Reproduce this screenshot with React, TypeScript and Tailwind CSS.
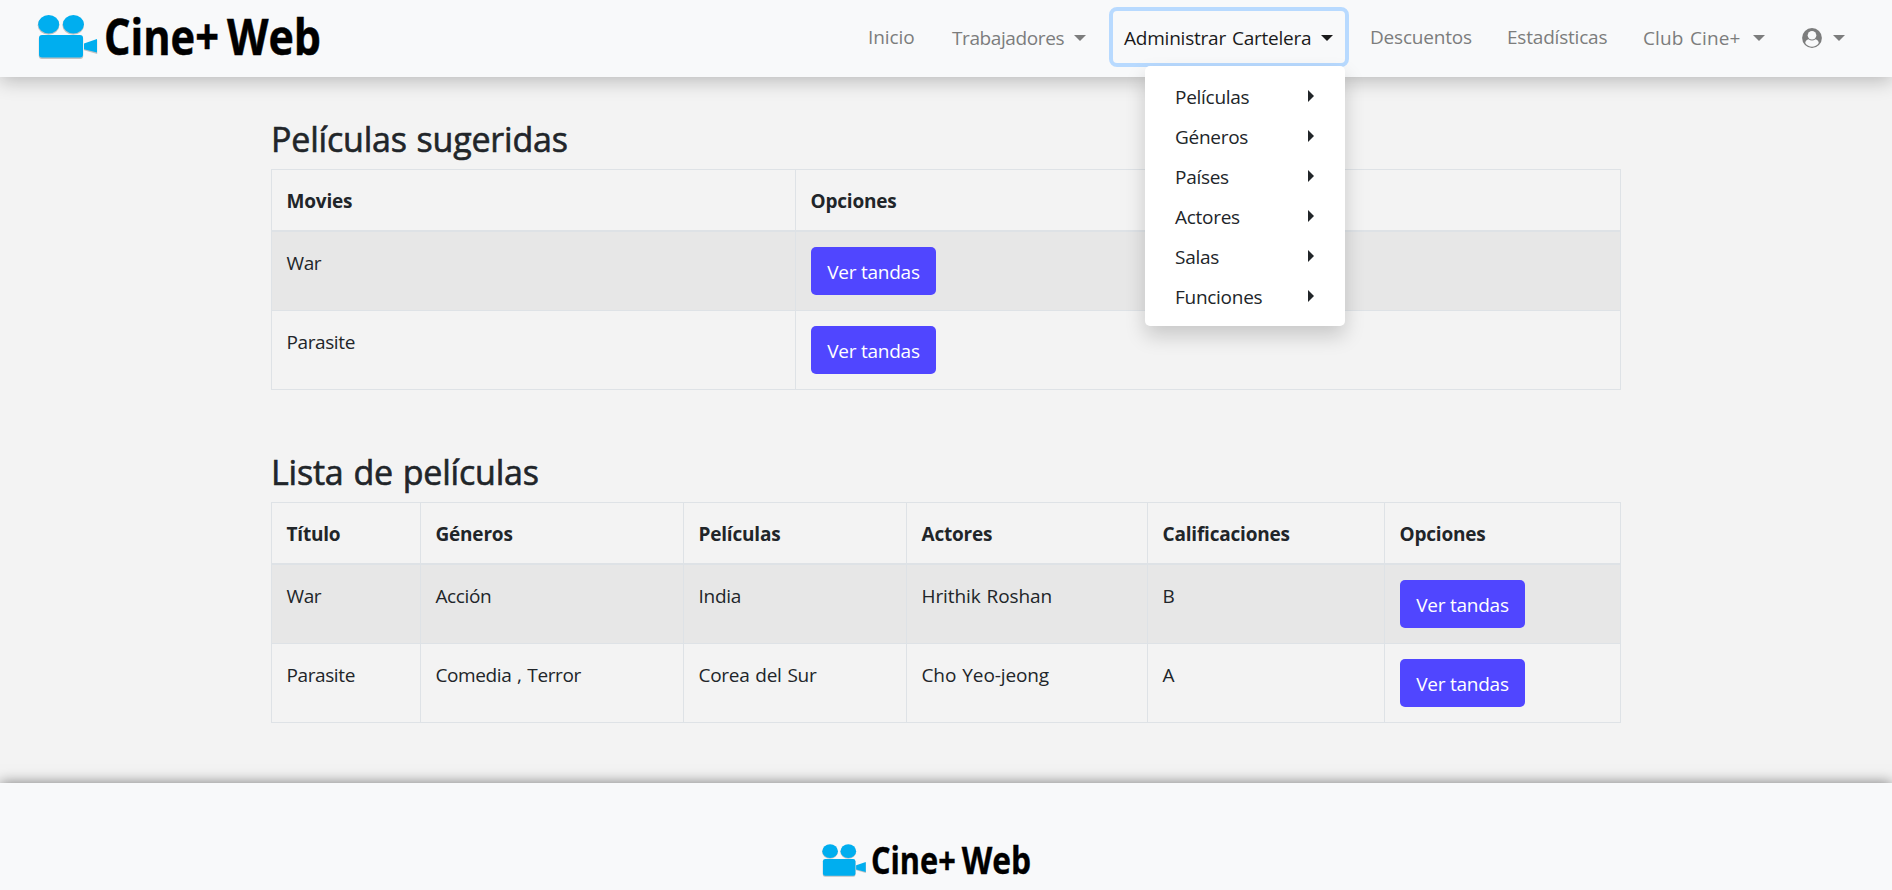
import { ReactNode } from "react";

function Logo({ className }: { className: string }) {
  return (
    <svg viewBox="0 0 290 50" className={`overflow-visible ${className}`} role="img" aria-label="Cine+ Web">
      <g fill="#808080" opacity="0.45" transform="translate(0 1)">
        <ellipse cx="13.5" cy="12.3" rx="10.8" ry="9.4" />
        <ellipse cx="38.2" cy="12.3" rx="10.8" ry="9.4" />
        <rect x="3.8" y="23" width="44.4" height="23" rx="3" />
        <path d="M49 31.6 62.2 27v14L49 37.2z" />
      </g>
      <g fill="#00aeef">
        <ellipse cx="13.7" cy="12.3" rx="10.5" ry="9.2" />
        <ellipse cx="38.4" cy="12.3" rx="10.5" ry="9.2" />
        <rect x="4" y="23" width="44" height="22.6" rx="3" />
        <path d="M49 31.6 62 27v13.5L49 37.2z" />
      </g>
      <g fill="#000" stroke="#000" strokeWidth="0.5" fontFamily="Open Sans, sans-serif" fontWeight="700" fontSize="51" letterSpacing="0" wordSpacing="0">
        <text x="69" y="43" textLength="115" lengthAdjust="spacingAndGlyphs">Cine+</text>
        <text x="192" y="43" textLength="94" lengthAdjust="spacingAndGlyphs">Web</text>
      </g>
    </svg>
  );
}

function Caret() {
  return (
    <svg viewBox="0 0 12 6" className="h-1.5 w-3 shrink-0" fill="currentColor">
      <path d="M0 0h12L6 6z" />
    </svg>
  );
}

const movies = [
  { title: "War", genres: "Acción", country: "India", actors: "Hrithik Roshan", rating: "B" },
  { title: "Parasite", genres: "Comedia , Terror", country: "Corea del Sur", actors: "Cho Yeo-jeong", rating: "A" },
];

const menu = ["Películas", "Géneros", "Países", "Actores", "Salas", "Funciones"];

function Th({ children, className }: { children: ReactNode; className: string }) {
  return (
    <th className={`border-r border-b-2 border-[#dee2e6] px-[14.5px] pt-0.5 text-left font-bold tracking-[-0.2px] ${className}`}>
      {children}
    </th>
  );
}

function Td({ children, className = "" }: { children: ReactNode; className?: string }) {
  return (
    <td className={`border-r border-b border-[#dee2e6] px-[14.5px] pt-4 align-top ${className}`}>{children}</td>
  );
}

function TandasButton() {
  return (
    <button className="-mt-px ml-[0.5px] block h-12 w-[125px] rounded-[5px] bg-[#5046ff] pt-0.5 text-center tracking-[-0.25px] whitespace-nowrap text-white">
      Ver tandas
    </button>
  );
}

const tableClass =
  "w-[1350px] table-fixed border-separate border-spacing-0 border-t border-l border-[#dee2e6] text-[19px] leading-[30px]";
const headingClass =
  "h-[42px] text-[34px] leading-[40px] font-medium tracking-[-0.2px] [-webkit-text-stroke:0.6px_#212529]";

export default function App() {
  return (
    <div className="flex h-[890px] flex-col overflow-hidden bg-[#f3f3f3] font-['Open_Sans',sans-serif] tracking-[-0.28px] text-[#212529] [word-spacing:1.2px]">
      <nav className="relative z-10 flex h-[77px] shrink-0 items-start bg-[#f8f9fa] pl-[35px] text-[19px] leading-[30px] text-[#7c7d7d] shadow-[0_4px_18px_rgba(0,0,0,0.24)]">
        <Logo className="mt-3 h-[50px] w-[290px] shrink-0" />
        <div className="ml-[543px] flex items-start pt-[22px] whitespace-nowrap">
          <span className="w-[84px] tracking-[-0.1px]">Inicio</span>
          <span className="flex w-[157px] items-center justify-between pt-px pr-[23px] tracking-[-0.4px]">Trabajadores<Caret /></span>
          <div className="relative -mt-[15px] h-[60px] w-[240px] rounded-[8px] border-4 border-[#b8daff] text-[#1a1a1a]">
            <span className="flex h-full items-center justify-between pt-px pr-3 pl-[11px] tracking-[-0.22px]">Administrar Cartelera<Caret /></span>
            <ul className="absolute top-[55px] left-8 h-[260px] w-[200px] rounded-[5px] bg-white pt-[11px] text-[#212529] shadow-[0_10px_20px_rgba(0,0,0,0.175)]">
              {menu.map((item) => (
                <li key={item} className="flex h-10 items-center justify-between pr-[31px] pl-[30px]">
                  {item}
                  <svg viewBox="0 0 6 12" className="mb-[3px] h-3 w-1.5" fill="currentColor">
                    <path d="M0 0v12l6-6z" />
                  </svg>
                </li>
              ))}
            </ul>
          </div>
          <span className="ml-[21px] w-[137px] tracking-[-0.2px]">Descuentos</span>
          <span className="w-[136px] tracking-[-0.2px]">Estadísticas</span>
          <span className="flex w-[122px] items-center justify-between pt-px tracking-[0.15px]">Club Cine+<Caret /></span>
          <span className="ml-[37px] flex h-[31px] w-[43px] items-center justify-between">
            <svg viewBox="0 0 20 20" className="h-5 w-5">
              <circle cx="10" cy="10" r="9.9" fill="currentColor" />
              <circle cx="10" cy="7.3" r="4.3" fill="#f8f9fa" />
              <path fill="#f8f9fa" d="M3.2 14.9c.3-1.9 1.500-3.400 3.300-3.700 2.200 1.700 4.800 1.700 7 0 1.800.3 3 1.800 3.300 3.700-3.300 5.100-10.300 5.100-13.600 0z" />
            </svg>
            <Caret />
          </span>
        </div>
      </nav>

      <main className="h-[706px] shrink-0 pt-[42px] pl-[271px]">
        <h2 className={headingClass}>Películas sugeridas</h2>
        <table className={`mt-2 ${tableClass}`}>
          <thead>
            <tr className="h-[62px]">
              <Th className="w-[524px]">Movies</Th>
              <Th className="w-[825px]">Opciones</Th>
            </tr>
          </thead>
          <tbody>
            {movies.map((m) => (
              <tr key={m.title} className="h-[79px] odd:bg-[#e7e7e7]">
                <Td className="tracking-[-0.4px]">{m.title}</Td>
                <Td><TandasButton /></Td>
              </tr>
            ))}
          </tbody>
        </table>

        <h2 className={`mt-[62px] ${headingClass}`}>Lista de películas</h2>
        <table className={`mt-2 ${tableClass}`}>
          <thead>
            <tr className="h-[62px]">
              <Th className="w-[149px]">Título</Th>
              <Th className="w-[263px]">Géneros</Th>
              <Th className="w-[223px]">Películas</Th>
              <Th className="w-[241px]">Actores</Th>
              <Th className="w-[237px]">Calificaciones</Th>
              <Th className="w-[236px]">Opciones</Th>
            </tr>
          </thead>
          <tbody>
            {movies.map((m) => (
              <tr key={m.title} className="h-[79px] odd:bg-[#e7e7e7]">
                <Td className="tracking-[-0.4px]">{m.title}</Td>
                <Td className="tracking-[-0.4px]">{m.genres}</Td>
                <Td>{m.country}</Td>
                <Td className="tracking-[-0.1px]">{m.actors}</Td>
                <Td>{m.rating}</Td>
                <Td><TandasButton /></Td>
              </tr>
            ))}
          </tbody>
        </table>
      </main>

      <footer className="h-[107px] shrink-0 bg-[#f8f9fa] pt-[59px] pl-[820px] shadow-[0_0_13px_rgba(0,0,0,0.5)]">
        <Logo className="h-[37px] w-[214px]" />
      </footer>
    </div>
  );
}
